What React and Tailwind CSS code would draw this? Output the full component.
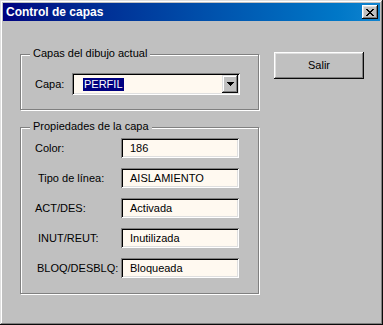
import React from "react";

const font = { fontFamily: '"Liberation Sans", Arial, sans-serif' };

function Field({ label, value, labelPad }) {
  return (
    <div className="flex items-center h-[20px]">
      <div className={`w-[100px] ${labelPad}`}>{label}</div>
      <div className="w-[118px] h-[20px] bg-[#fff9f0] shadow-[inset_1px_1px_#808080,inset_-1px_-1px_#ffffff,inset_2px_2px_#000000,inset_-2px_-2px_#dfdfdf] flex items-center pl-[9px]">
        {value}
      </div>
    </div>
  );
}

export default function App() {
  return (
    <div
      className="w-[383px] h-[325px] bg-[#c0c0c0] p-[3px] text-[11px] text-black shadow-[inset_-1px_-1px_#0a0a0a,inset_1px_1px_#dfdfdf,inset_-2px_-2px_#808080,inset_2px_2px_#ffffff]"
      style={font}
    >
      <div className="h-[18px] flex items-center justify-between bg-gradient-to-r from-[#000080] to-[#1084d0] pl-[3px] pr-[2px]">
        <span className="text-white font-bold text-[12px] leading-none">Control de capas</span>
        <div className="w-[16px] h-[14px] bg-[#c0c0c0] shadow-[inset_-1px_-1px_#0a0a0a,inset_1px_1px_#ffffff,inset_-2px_-2px_#808080,inset_2px_2px_#dfdfdf] flex items-center justify-center">
          <svg width="8" height="7" viewBox="0 0 8 7" shapeRendering="crispEdges">
            <path d="M0 0h2v1h-2zM6 0h2v1h-2zM1 1h2v1h-2zM5 1h2v1h-2zM2 2h4v1h-4zM3 3h2v1h-2zM2 4h4v1h-4zM1 5h2v1h-2zM5 5h2v1h-2zM0 6h2v1h-2zM6 6h2v1h-2z" fill="#000" />
          </svg>
        </div>
      </div>
      <div className="flex">
        <div className="ml-[17px] mt-[33px] w-[239px]">
          <div className="relative h-[56px] border border-[#808080] shadow-[inset_1px_1px_#ffffff,1px_1px_#ffffff]">
            <span className="absolute left-[9px] top-[-8px] px-[3px] bg-[#c0c0c0] leading-[13px]">
              Capas del dibujo actual
            </span>
            <div className="flex items-center mt-[18px] ml-[14px]">
              <span className="w-[37px]">Capa:</span>
              <div className="w-[168px] h-[22px] bg-[#fff9f0] shadow-[inset_1px_1px_#808080,inset_-1px_-1px_#ffffff,inset_2px_2px_#000000,inset_-2px_-2px_#dfdfdf] flex items-center justify-between p-[2px] pl-[11px]">
                <span className="bg-[#000080] text-white px-[1px] leading-[13px]">PERFIL</span>
                <div className="w-[16px] h-[18px] bg-[#c0c0c0] shadow-[inset_-1px_-1px_#0a0a0a,inset_1px_1px_#dfdfdf,inset_-2px_-2px_#808080,inset_2px_2px_#ffffff] flex items-center justify-center">
                  <svg width="7" height="4" viewBox="0 0 7 4" shapeRendering="crispEdges">
                    <path d="M0 0h7v1h-7zM1 1h5v1h-5zM2 2h3v1h-3zM3 3h1v1h-1z" fill="#000" />
                  </svg>
                </div>
              </div>
            </div>
          </div>
          <div className="relative mt-[17px] h-[167px] border border-[#808080] shadow-[inset_1px_1px_#ffffff,1px_1px_#ffffff]">
            <span className="absolute left-[9px] top-[-8px] px-[3px] bg-[#c0c0c0] leading-[13px]">
              Propiedades de la capa
            </span>
            <div className="flex flex-col gap-[10px] mt-[10px]">
              <Field label="Color:" value="186" labelPad="pl-[14px]" />
              <Field label="Tipo de línea:" value="AISLAMIENTO" labelPad="pl-[17px]" />
              <Field label="ACT/DES:" value="Activada" labelPad="pl-[14px]" />
              <Field label="INUT/REUT:" value="Inutilizada" labelPad="pl-[17px]" />
              <Field label="BLOQ/DESBLQ:" value="Bloqueada" labelPad="pl-[16px]" />
            </div>
          </div>
        </div>
        <div className="ml-[15px] mt-[31px] w-[90px] h-[27px] bg-[#c0c0c0] shadow-[inset_-1px_-1px_#0a0a0a,inset_1px_1px_#ffffff,inset_-2px_-2px_#808080,inset_2px_2px_#dfdfdf] flex items-center justify-center">
          Salir
        </div>
      </div>
    </div>
  );
}
